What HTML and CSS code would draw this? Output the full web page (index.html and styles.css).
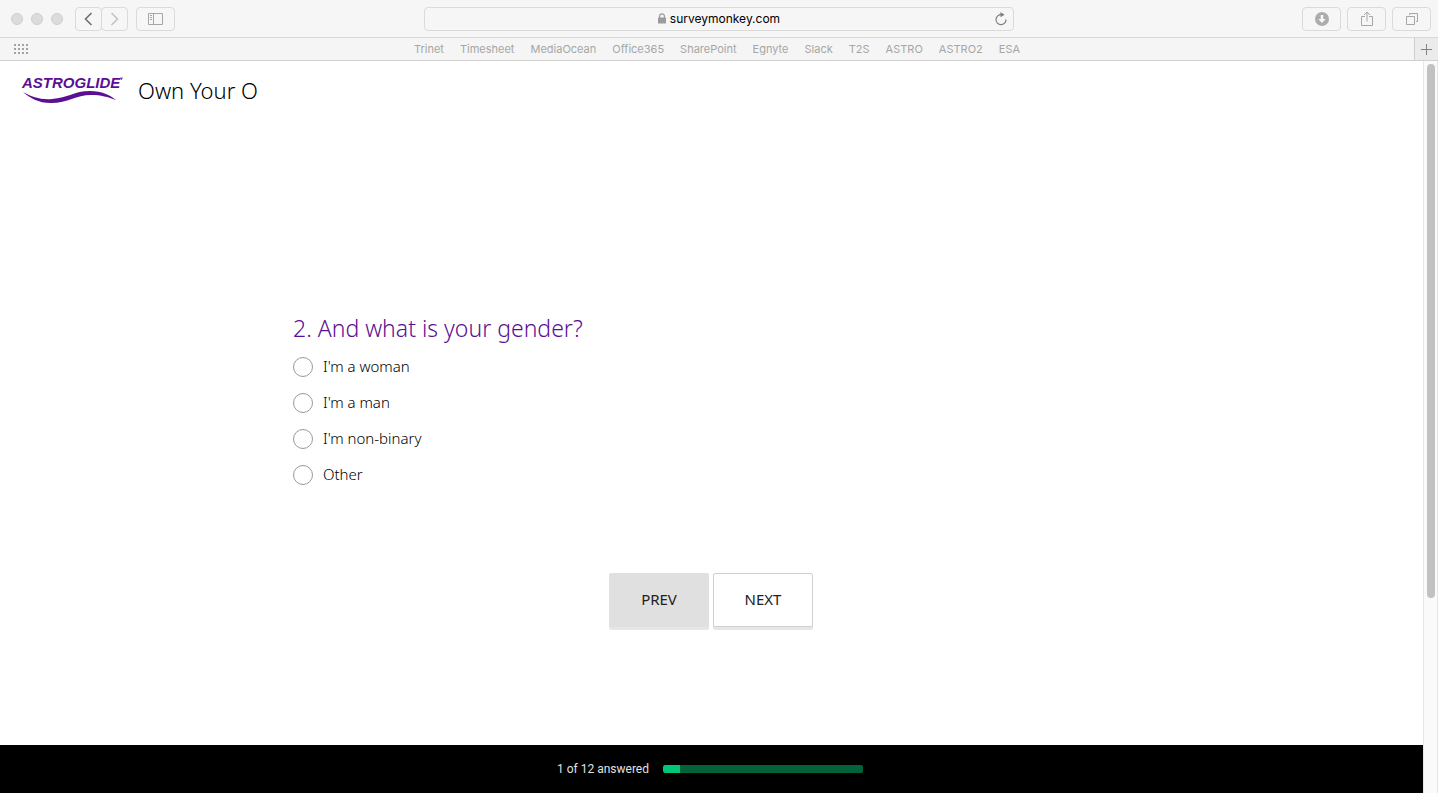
FILE: index.html
```html
<!DOCTYPE html>
<html lang="en">
<head>
<meta charset="utf-8">
<title>Own Your O</title>
<link rel="stylesheet" href="styles.css">
</head>
<body>
<div class="window">
  <header class="toolbar">
    <div class="tools tools-left">
      <div class="lights"><span class="light"></span><span class="light"></span><span class="light"></span></div>
      <div class="nav">
        <button class="tool nav-back" aria-label="Back"><svg width="24" height="22" viewBox="0 0 24 22"><path d="M14.500 5 L8.500 11 L14.500 17" fill="none" stroke="#6e6e6e" stroke-width="1.600"/></svg></button>
        <button class="tool nav-forward" aria-label="Forward"><svg width="24" height="22" viewBox="0 0 24 22"><path d="M8.500 5 L14.500 11 L8.500 17" fill="none" stroke="#c4c4c4" stroke-width="1.600"/></svg></button>
      </div>
      <button class="tool" aria-label="Show sidebar"><svg width="16" height="12" viewBox="0 0 16 12" fill="none" stroke="#a6a6a6"><path d="M.5 .5h14v11h-14zM5.500 .5v11M2 2.500h2M2 4.500h2M2 6.500h2"/></svg></button>
    </div>
    <div class="address">
      <svg class="lock" width="8" height="11" viewBox="0 0 8 11"><path d="M1.600 5V3.200a2.400 2.400 0 0 1 4.800 0V5" fill="none" stroke="#9b9b9b" stroke-width="1.200"/><rect y="4.500" width="8" height="6" rx=".6" fill="#9b9b9b"/></svg>
      <span>surveymonkey.com</span>
      <button class="reload" aria-label="Reload"><svg width="12" height="14" viewBox="0 0 12 14"><path d="M6.500 2.700A5 5 0 1 0 11 7.500" fill="none" stroke="#7d7d7d" stroke-width="1.200"/><path d="M5.500 0 L9.500 2.800 L5.500 5.300z" fill="#7d7d7d"/></svg></button>
    </div>
    <div class="tools tools-right">
      <button class="tool" aria-label="Downloads"><svg width="14" height="14" viewBox="0 0 14 14"><circle cx="7" cy="7" r="7" fill="#acacac"/><path d="M5.700 3h2.600v4h2.400L7 11 3.300 7h2.400z" fill="#f6f6f6"/></svg></button>
      <button class="tool" aria-label="Share"><svg width="12" height="16" viewBox="0 0 12 16" fill="none" stroke="#a6a6a6"><path d="M4 5.500H.5v9h11v-9H8M6 10.500V1M3 4l3-3 3 3"/></svg></button>
      <button class="tool" aria-label="Show all tabs"><svg width="12" height="12" viewBox="0 0 12 12" fill="none" stroke="#a6a6a6"><path d="M.5 3.500h8v8h-8zM3.500 2V.5h8v8H10"/></svg></button>
    </div>
  </header>
  <nav class="bookmarks" aria-label="Favorites">
    <button class="plain grid-button" aria-label="Top sites"><svg width="14" height="10" viewBox="0 0 14 10" stroke="#a3a3a3" stroke-width="2" stroke-dasharray="2 2"><path d="M0 1h14M0 5h14M0 9h14"/></svg></button>
    <div class="links">
      <a href="#">Trinet</a><a href="#">Timesheet</a><a href="#">MediaOcean</a><a href="#">Office365</a><a href="#">SharePoint</a><a href="#">Egnyte</a><a href="#">Slack</a><a href="#">T2S</a><a href="#">ASTRO</a><a href="#">ASTRO2</a><a href="#">ESA</a>
    </div>
    <button class="plain new-tab" aria-label="New tab"><svg width="11" height="11" viewBox="0 0 11 11" stroke="#828282"><path d="M0 5.500h11M5.500 0v11"/></svg></button>
  </nav>
  <div class="viewport">
    <div class="page">
      <header class="survey-header">
        <svg class="logo" width="102" height="32" viewBox="0 0 102 32" role="img" aria-label="Astroglide">
          <text class="logo-text" x="0" y="14">ASTROGLIDE</text>
          <path d="M98 4h3M99.500 4v2" stroke="#5b0f94" stroke-width=".7"/>
          <path d="M1 18C10 23 19 26 30 25C46 24 52 17 68 17C80 17 88 21 94 26C86 23 79 21 69 21C54 21 46 29 29 29C16 29 8 24 1 18z" fill="#5b0f94"/>
        </svg>
        <h1 class="survey-title">Own Your O</h1>
      </header>
      <form class="survey">
        <fieldset class="question">
          <legend class="question-title">2. And what is your gender?</legend>
          <label class="option"><input type="radio" name="gender"><span>I'm a woman</span></label>
          <label class="option"><input type="radio" name="gender"><span>I'm a man</span></label>
          <label class="option"><input type="radio" name="gender"><span>I'm non-binary</span></label>
          <label class="option"><input type="radio" name="gender"><span>Other</span></label>
        </fieldset>
        <div class="actions">
          <button type="button" class="action prev">PREV</button>
          <button type="button" class="action next">NEXT</button>
        </div>
      </form>
      <footer class="progress-bar">
        <span id="answered">1 of 12 answered</span>
        <div class="track" role="progressbar" aria-labelledby="answered" aria-valuemin="0" aria-valuemax="12" aria-valuenow="1"><div class="fill" style="width:8.33%"></div></div>
      </footer>
    </div>
    <div class="scrollbar"><div class="thumb"></div></div>
  </div>
</div>
</body>
</html>
```
FILE: styles.css
```css
* { box-sizing: border-box; }

body {
  margin: 0;
  font-family: "Noto Sans", sans-serif;
  color: #222;
  background: #fff;
}

button { font: inherit; cursor: pointer; }

.window {
  display: flex;
  flex-direction: column;
  height: 100vh;
  overflow: hidden;
}

.toolbar {
  display: grid;
  grid-template-columns: 1fr minmax(0, 590px) 1fr;
  align-items: center;
  height: 38px;
  flex: none;
  padding: 0 7px;
  background: #f6f6f6;
  border-bottom: 1px solid #d9d9d9;
  font-family: Inter, sans-serif;
}

.tools { display: flex; align-items: center; gap: 8px; }
.tools-right { justify-content: flex-end; gap: 6px; }

.lights { display: flex; gap: 8px; margin: 0 4px; }
.light {
  width: 12px;
  height: 12px;
  border: 1px solid #cecece;
  border-radius: 50%;
  background: #dcdcdc;
}

.nav { display: flex; }

.tool {
  display: flex;
  align-items: center;
  justify-content: center;
  width: 39px;
  height: 24px;
  padding: 0;
  border: 1px solid #dadada;
  border-radius: 4px;
  background: #f6f6f6;
}
.nav .tool { width: 27px; }
.nav .nav-forward { margin-left: -1px; }

.address {
  display: flex;
  align-items: center;
  justify-content: center;
  gap: 4px;
  position: relative;
  height: 24px;
  border: 1px solid #dadada;
  border-radius: 4px;
  font-size: 12px;
  color: #000;
}
.reload {
  position: absolute;
  right: 6px;
  display: flex;
  padding: 0;
  border: 0;
  background: none;
}

.bookmarks {
  display: flex;
  align-items: center;
  height: 23px;
  flex: none;
  background: #f5f5f5;
  border-bottom: 1px solid #cfcfcf;
  font-family: Inter, sans-serif;
  font-size: 11px;
}
.plain {
  display: flex;
  align-items: center;
  border: 0;
  padding: 0;
  background: none;
}
.grid-button { padding-left: 14px; }
.links {
  display: flex;
  flex: 1;
  justify-content: center;
  gap: 16px;
  padding-right: 8px;
}
.links a { color: #a6a6a6; text-decoration: none; }
.new-tab {
  justify-content: center;
  align-self: stretch;
  width: 24px;
  border-left: 1px solid #cfcfcf;
  background: #ebebeb;
}

.viewport { display: flex; flex: 1; min-height: 0; }
.page { display: flex; flex: 1; flex-direction: column; }

.survey-header {
  display: flex;
  align-items: center;
  gap: 14px;
  height: 58px;
  padding-left: 22px;
}
.logo { overflow: visible; }
.logo-text {
  font: italic bold 15px "Liberation Sans", sans-serif;
  fill: #5b0f94;
}
.survey-title {
  margin: 0;
  font-size: 22px;
  font-weight: 300;
  line-height: 30px;
  color: #000;
}

.survey {
  flex: 1;
  width: 100%;
  max-width: 877px;
  margin: 0 auto;
  padding: 193px 21px 0 20px;
}
.question {
  display: flex;
  flex-direction: column;
  gap: 12px;
  margin: 0;
  padding: 0;
  border: 0;
}
.question-title {
  margin-bottom: 11px;
  padding: 0;
  font-size: 23px;
  font-weight: 300;
  line-height: 32px;
  color: #5b0f94;
}
.option {
  display: flex;
  align-items: center;
  align-self: flex-start;
  gap: 10px;
  font-size: 15px;
  font-weight: 300;
  line-height: 24px;
  color: #000;
}
.option span { padding-bottom: 2px; line-height: 22px; }
.option input {
  appearance: none;
  width: 20px;
  height: 20px;
  margin: 0;
  border: 1px solid #999;
  border-radius: 50%;
  background: #fff;
}
.option input:checked { border: 6px solid #5b0f94; }

.actions {
  display: flex;
  justify-content: center;
  gap: 4px;
  margin-top: 86px;
}
.action {
  width: 100px;
  height: 54px;
  padding: 0 0 2px;
  border: 1px solid #d0d0d0;
  border-radius: 2px;
  background: #fff;
  box-shadow: 0 3px 0 #e6e6e6;
  font-size: 15px;
  color: #222;
}
.prev { background: #e0e0e0; border-color: #e0e0e0; }

.progress-bar {
  display: flex;
  align-items: center;
  justify-content: center;
  gap: 14px;
  height: 48px;
  padding-right: 3px;
  background: #000;
  font-family: Roboto, sans-serif;
  font-size: 12px;
  color: #e0e0e0;
}
.track {
  width: 200px;
  height: 8px;
  border-radius: 2px;
  overflow: hidden;
  background: #00633a;
}
.fill { height: 100%; border-radius: 2px 0 0 2px; background: #00c676; }

.scrollbar {
  width: 15px;
  padding: 3px 2px 2px 3px;
  border-left: 1px solid #e6e6e6;
  border-right: 1px solid #e6e6e6;
  background: #fafafa;
}
.thumb {
  width: 8px;
  height: 73.5%;
  border-radius: 4px;
  background: #c1c1c1;
}
```
